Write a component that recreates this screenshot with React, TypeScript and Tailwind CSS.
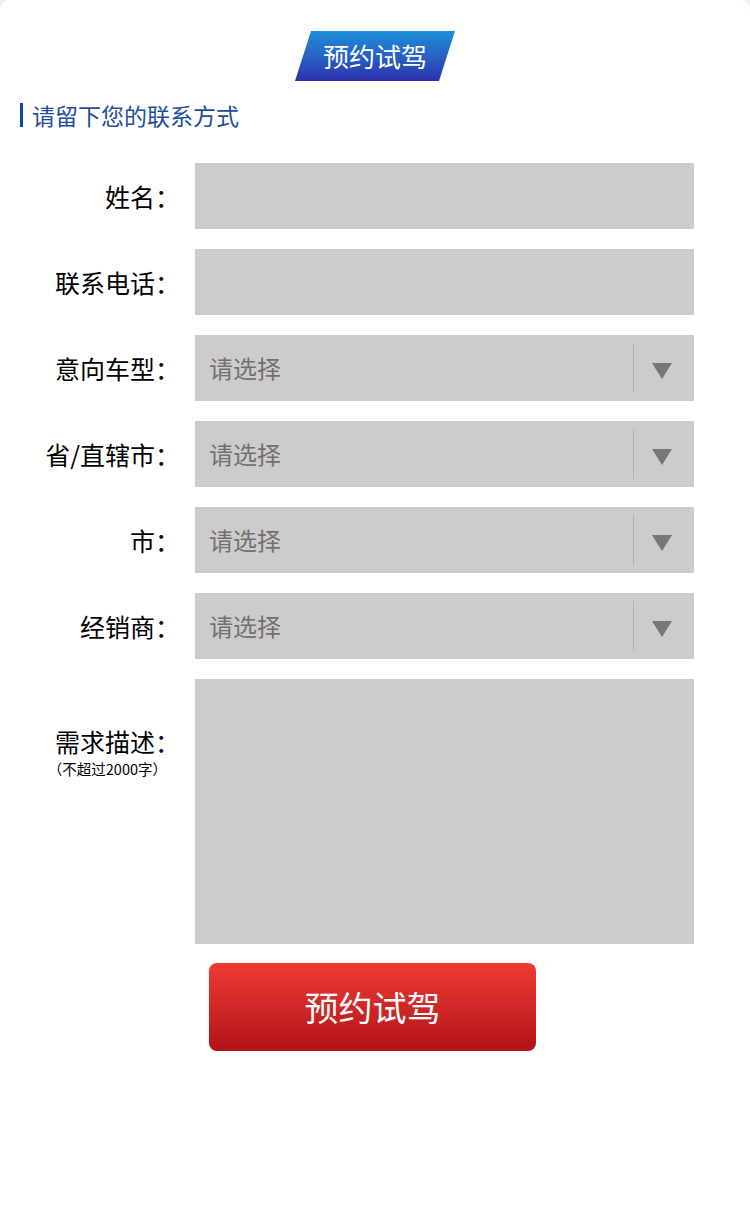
import React from "react";

const font = { fontFamily: '"Noto Sans CJK SC", "Noto Sans", sans-serif' };

function Arrow() {
  return (
    <svg width="20" height="16" viewBox="0 0 20 16" className="block">
      <polygon points="0,0 20,0 10,16" fill="#777777" />
    </svg>
  );
}

function TextRow({ label }: { label: string }) {
  return (
    <div className="flex items-center">
      <div className="w-[195px] shrink-0 pr-[15px] text-right text-[25px] leading-none text-black">{label}</div>
      <div className="h-[66px] w-[499px] bg-[#cdcbcc]" />
    </div>
  );
}

function SelectRow({ label }: { label: string }) {
  return (
    <div className="flex items-center">
      <div className="w-[195px] shrink-0 pr-[15px] text-right text-[25px] leading-none text-black">{label}</div>
      <div className="flex h-[66px] w-[499px] items-center bg-[#cdcbcc]">
        <div className="flex-1 pl-[14px] text-[24px] leading-none text-[#717171]">请选择</div>
        <div className="h-[50px] w-px bg-[#b3b1b1]" />
        <div className="flex w-[60px] justify-center pr-[4px] pt-[5px]">
          <Arrow />
        </div>
      </div>
    </div>
  );
}

export default function App() {
  return (
    <div className="bg-[#f0f0f0]" style={font}>
      <div className="flex h-[1218px] w-[750px] flex-col rounded-t-[10px] bg-white">
        <div className="flex justify-center pt-[31px]">
          <div className="relative flex h-[50px] w-[160px] items-center justify-center">
            <div className="absolute inset-0 bg-gradient-to-b from-[#1a8fda] to-[#2b30ac] [clip-path:polygon(10%_0,100%_0,90%_100%,0_100%)]" />
            <span className="relative text-[26px] leading-none text-white">预约试驾</span>
          </div>
        </div>
        <div className="mt-[22px] flex items-center pl-[20px]">
          <div className="h-[24px] w-[3px] bg-[#0c4ba3]" />
          <span className="ml-[9px] text-[23px] leading-none text-[#1c4e9c]">请留下您的联系方式</span>
        </div>
        <div className="mt-[36px] flex flex-col gap-[20px]">
          <TextRow label="姓名：" />
          <TextRow label="联系电话：" />
          <SelectRow label="意向车型：" />
          <SelectRow label="省/直辖市：" />
          <SelectRow label="市：" />
          <SelectRow label="经销商：" />
          <div className="flex">
            <div className="flex w-[195px] shrink-0 flex-col items-end pt-[50px]">
              <div className="pr-[15px] text-[25px] leading-none text-black">需求描述：</div>
              <div className="mt-[8px] pr-[28px] text-[14.5px] leading-none text-black">（不超过2000字）</div>
            </div>
            <div className="h-[265px] w-[499px] bg-[#cdcbcc]" />
          </div>
        </div>
        <div className="mt-[19px] pl-[209px]">
          <div className="flex h-[88px] w-[327px] items-center justify-center rounded-[8px] bg-gradient-to-b from-[#ef3a35] to-[#b21118]">
            <span className="text-[34px] leading-none text-white">预约试驾</span>
          </div>
        </div>
      </div>
    </div>
  );
}
